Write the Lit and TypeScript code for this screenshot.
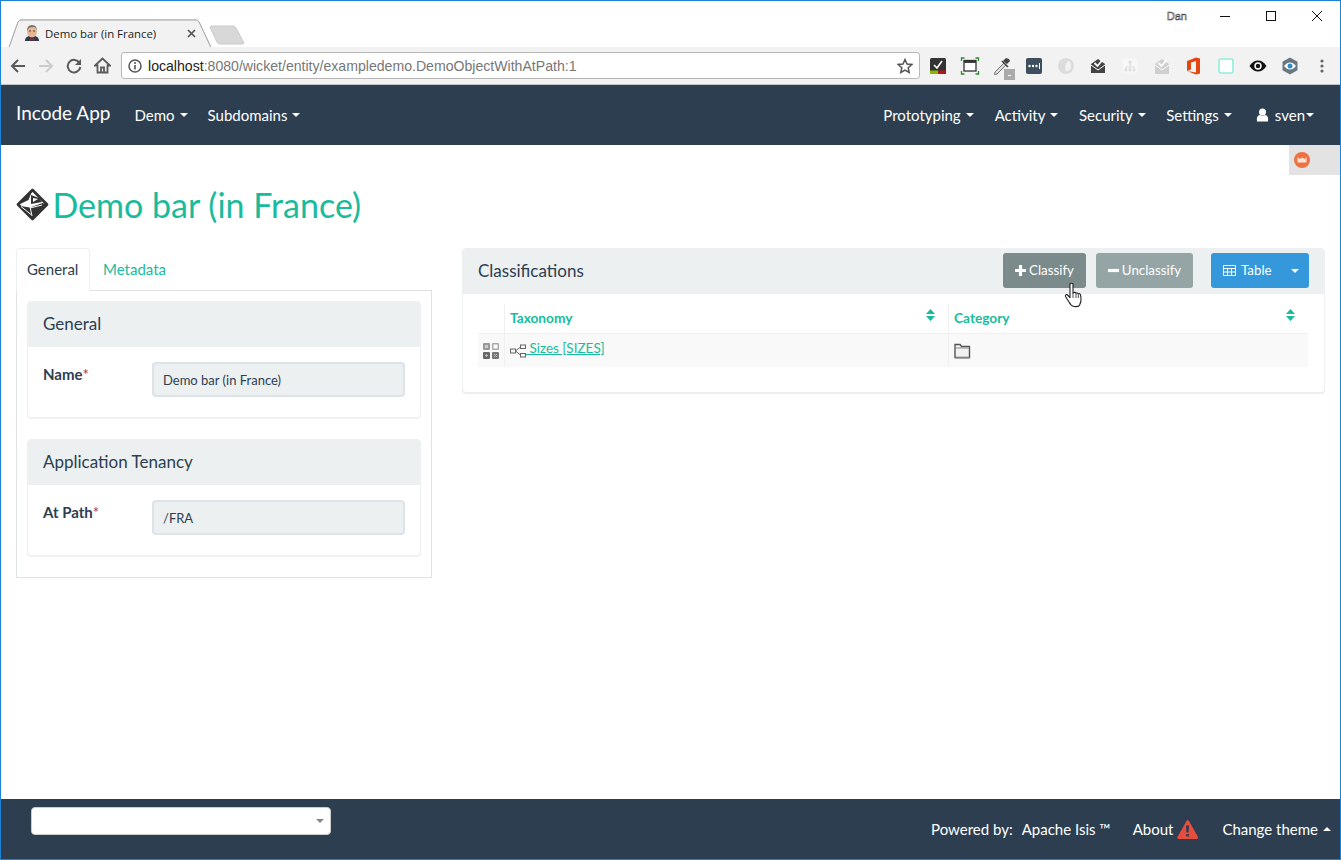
import { LitElement, html, css, svg } from "lit";
import { customElement } from "lit/decorators.js";

const ext = [
  svg`<rect x="2" y="2" width="16" height="16" rx="1.5" fill="#333"/><rect x="2" y="14.500" width="8" height="3.500" fill="#8db600"/><rect x="10" y="14.500" width="8" height="3.500" fill="#b01818"/><path d="M6 9l3 3 5-7" fill="none" stroke="#fff" stroke-width="1.600"/>`,
  svg`<rect x="4" y="4.500" width="12" height="10.500" fill="#fff" stroke="#333" stroke-width="1.300"/><rect x="4" y="4.500" width="12" height="2.400" fill="#333"/><path d="M1.500 5V2h3M15.500 2h3v3M18.500 15v3h-3M4.500 18h-3v-3" fill="none" stroke="#2a8a2a" stroke-width="1.300"/>`,
  svg`<path d="M3 16l9-9 2 2-9 9-2.500.5z" fill="#ddd" stroke="#777"/><path d="M11 5l3-3 3 1 1 2-3 3z" fill="#444"/><path d="M10 5l6 6" stroke="#444" stroke-width="1.600"/><rect x="12" y="13" width="11" height="11" fill="#aaa"/><rect x="16" y="19" width="3" height="1" fill="#fff"/>`,
  svg`<rect x="2" y="2" width="16" height="16" rx="2" fill="#3d4e5e"/><circle cx="5.500" cy="10" r="1.200" fill="#fff"/><circle cx="9" cy="10" r="1.200" fill="#fff"/><circle cx="12.500" cy="10" r="1.200" fill="#fff"/><rect x="15" y="7" width="1" height="6" fill="#fff"/>`,
  svg`<path d="M10 2a8 8 0 1 0 0 16 8 8 0 0 0 0-16zm3 3c-3 1-5 6-3 10 2 1 5-1 5-5 0-2-1-4-2-5z" fill="#dcdcdc" fill-rule="evenodd"/>`,
  svg`<path d="M3 8l7-5 7 5v9H3z" fill="#444"/><path d="M3 9l7 5 7-5" fill="none" stroke="#fff"/><path d="M6.500 7l3 3 5-6" fill="none" stroke="#fff" stroke-width="1.800"/>`,
  svg`<rect x="2.500" y="2.500" width="15" height="15" rx="3" fill="#f7f7f7"/><path d="M10 5v3M6 14v-3h8v3M10 8v6" fill="none" stroke="#ddd" stroke-width="1.200"/><circle cx="10" cy="6" r="1.600" fill="#ddd"/><circle cx="6" cy="14" r="1.500" fill="#ddd"/><circle cx="10" cy="14" r="1.500" fill="#ddd"/><circle cx="14" cy="14" r="1.500" fill="#ddd"/>`,
  svg`<path d="M3 8l7-5 7 5v10H3z" fill="#cfcfcf"/><path d="M3 9l7 5 7-5" fill="none" stroke="#fff"/><path d="M6.500 7l3 3 5-6" fill="none" stroke="#fff" stroke-width="1.800"/>`,
  svg`<path d="M3 5l9-3.500 4 1v15l-4 1L3 15l9 1.500V5L7 6.500v7L3 15z" fill="#e3470f"/>`,
  svg`<rect x="3" y="3" width="14" height="14" rx="2" fill="#fff" stroke="#8feedd" stroke-width="1.600"/>`,
  svg`<path d="M1.500 10C4 6 7 4.500 10 4.500S16 6 18.500 10C16 14 13 15.500 10 15.500S4 14 1.500 10z" fill="#111"/><circle cx="10" cy="10" r="3.700" fill="#fff"/><circle cx="10" cy="10" r="2.200" fill="#111"/>`,
  svg`<path d="M10 1.500l7.500 4.300v8.400L10 18.500l-7.500-4.300V5.800z" fill="#6b7780"/><path d="M4 10c2-2.500 4-3.500 6-3.500s4 1 6 3.500c-2 2.500-4 3.500-6 3.500S6 12.500 4 10z" fill="#fff"/><circle cx="10" cy="10" r="2.500" fill="#2a8fc4"/>`,
];

@customElement("app-root")
export class AppRoot extends LitElement {
  static styles = css`
    :host { display: block; font-family: Lato, "Open Sans", sans-serif; color: #2c3e50; }
    * { box-sizing: border-box; }
    a { text-decoration: none; color: inherit; }
    .window { position: relative; height: 860px; border: 1px solid #1b82d6; display: flex; flex-direction: column; background: #fff; overflow: hidden; }

    .titlebar { height: 46px; flex: none; display: flex; align-items: flex-end; position: relative; font-family: "Open Sans", "Liberation Sans", sans-serif; }
    .tabshape { position: absolute; left: 0; top: 0; width: 1339px; height: 46px; }
    .tab { position: relative; width: 203px; margin-left: 6px; height: 27px; display: flex; align-items: center; padding: 0 0 1px 17px; gap: 5px; font-size: 11.400px; color: #222; }
    .tab .tt { flex: 1; white-space: nowrap; }
    .tab .x { margin-right: 14px; display: block; }
    .winctl { position: absolute; top: 0; right: 0; height: 30px; display: flex; align-items: center; }
    .dan { font-family: "Liberation Sans", sans-serif; font-size: 11px; color: #fff; -webkit-text-stroke: 0.5px #333; margin-right: 15px; }
    .wc { width: 46px; height: 30px; display: flex; align-items: center; justify-content: center; }
    .wc svg { display: block; }

    .toolbar { height: 38px; flex: none; background: #f2f2f2; border-bottom: 1px solid #c4c4c4; display: flex; align-items: center; padding-left: 3px; }
    .navbtn { width: 28px; height: 24px; display: flex; align-items: center; justify-content: center; flex: none; }
    .omni { margin-left: 5px; width: 799px; height: 27px; background: #fff; border: 1px solid #b8b8b8; border-radius: 3px; display: flex; align-items: center; font-family: "Liberation Sans", sans-serif; font-size: 14.100px; color: #222; padding: 0 6px 0 6px; flex: none; }
    .omni .info { margin-right: 6px; flex: none; display: block; }
    .omni .url { flex: 1; white-space: nowrap; overflow: hidden; }
    .omni .dim { color: #777; }
    .exts { display: flex; align-items: center; margin-left: 2px; }
    .ext { width: 32px; height: 24px; display: flex; align-items: center; justify-content: center; }
    .ext svg { display: block; overflow: visible; }
    .menu { width: 32px; display: flex; justify-content: center; }
    .menu svg { display: block; }

    .nav { height: 60px; flex: none; background: #2c3e50; color: #fff; display: flex; align-items: center; padding: 0 15px; font-size: 15px; }
    .brand { font-size: 19px; margin-right: 24px; margin-bottom: 6px; }
    .nav a.item { margin-right: 20px; display: inline-flex; align-items: center; gap: 5px; }
    .nav a.item.r { margin-right: 20.500px; }
    .nav a.item.p { margin-right: 21px; }
    .nav a.item.set { margin-right: 24px; }
    .nav .spacer { flex: 1; }
    .caret { display: inline-block; width: 0; height: 0; border-left: 4px solid transparent; border-right: 4px solid transparent; border-top: 4px solid currentColor; }
    .caret.up { border-top: 0; border-bottom: 4px solid currentColor; }
    .nav a.item.user { margin-right: 11px; gap: 1px; }
    .nav .user svg { margin-right: 5px; display: block; }

    .floater { position: absolute; right: 0; top: 144px; width: 51px; height: 30px; background: #e3e3e3; display: flex; align-items: center; padding-left: 5px; }

    .content { flex: 1; padding: 0 15px; min-height: 0; }
    .title { display: flex; align-items: center; height: 46px; margin: 36px 0 0; gap: 3.500px; color: #18bc9c; font-size: 34px; font-weight: 400; white-space: nowrap; }
    .title svg { display: block; flex: none; }
    .cols { display: grid; grid-template-columns: 416px 863px; gap: 30px; margin-top: 21px; align-items: start; }

    .tabs { display: flex; height: 43px; font-size: 15px; }
    .t { padding: 0 10px 2px; display: flex; align-items: center; border: 1px solid transparent; color: #18bc9c; margin-left: 2px; }
    .t.on { color: #2c3e50; background: #fff; border-color: #ecf0f1; border-bottom-color: #fff; border-radius: 4px 4px 0 0; margin-left: 0; height: 43px; width: 74px; position: relative; z-index: 1; }
    .pane { border: 1px solid #dfe3e5; margin-top: -1px; padding: 10px; height: 288px; display: flex; flex-direction: column; gap: 21px; }
    .panel { border: 1px solid #ecf0f1; border-radius: 4px; box-shadow: 0 1px 1px rgba(0,0,0,.05); background: #fff; }
    .ph { height: 45px; background: #ecf0f1; display: flex; align-items: center; padding: 0 15px 2px; font-size: 17px; }
    .pb { display: grid; grid-template-columns: 109px 253px; padding: 15px 0 20px 15px; height: 70px; }
    .lab { font-weight: 700; font-size: 15px; padding-top: 2px; line-height: 20px; }
    .lab i { color: #b8321f; font-style: normal; font-weight: 400; }
    .inp { height: 35px; background: #ecf0f1; border: 2px solid #dde4e9; border-radius: 4px; font-size: 13px; display: flex; align-items: center; padding: 0 9px; }

    .cp { border: 1px solid #ecf0f1; border-radius: 4px; background: #fff; box-shadow: 0 1px 1px rgba(0,0,0,.08); height: 145px; }
    .ch { height: 45px; background: #ecf0f1; display: flex; align-items: center; padding: 0 15px 2px; font-size: 17px; border-radius: 3px 3px 0 0; }
    .ch .nm { flex: 1; }
    .btn { height: 35px; border-radius: 3px; color: #fff; font-size: 13.300px; display: flex; align-items: center; justify-content: center; gap: 3px; padding-bottom: 2px; }
    .btn svg { margin-top: 2px; }
    .b1 { width: 83px; background: #7b8a8b; margin-right: 10px; }
    .b2 { width: 97px; background: #95a5a6; margin-right: 18px; }
    .b3 { width: 98px; background: #3498db; margin-right: 0; justify-content: flex-start; padding-left: 12px; gap: 0; }
    .b3 svg { margin-right: 5px; display: block; }
    .b3 .caret { margin-left: 19px; margin-top: 2px; }
    .btn svg { display: block; }

    .tbl { margin: 10px 16px 0 15px; }
    .tr { display: grid; grid-template-columns: 26px 444px 360px; }
    .tr > div { border-left: 1px solid #ecf0f1; display: flex; align-items: center; padding: 0 5px; }
    .tr > div:first-child { border-left: 0; padding: 0; justify-content: center; }
    .head { height: 30px; border-bottom: 1px solid #ecf0f1; font-size: 13.700px; font-weight: 700; color: #18bc9c; }
    .head > div { padding: 0 13px 2px 5px !important; justify-content: space-between; }
    .head svg { display: block; margin-bottom: 5px; }
    .row { height: 33px; background: #f9f9f9; font-size: 13.500px; }
    .row a { color: #18bc9c; text-decoration: underline; display: block; margin-bottom: 6px; white-space: pre; }
    .row svg { display: block; }
    .row .ic { margin-right: 0; }

    .cursor { position: absolute; left: 1063px; top: 281px; display: block; }

    .foot { height: 60px; flex: none; background: #2c3e50; color: #fff; display: flex; align-items: center; padding: 0 9px 0 30px; font-size: 15px; }
    .sel { width: 300px; height: 28px; background: #fff; border-radius: 4px; border: 1px solid #ccc; margin-bottom: 17px; display: flex; align-items: center; justify-content: flex-end; padding-right: 6px; color: #888; }
    .foot .spacer { flex: 1; }
    .foot .a { display: flex; align-items: center; }
    .foot .p { margin-right: 9px; }
    .foot .i { margin-right: 22px; }
    .foot .ab { gap: 4px; margin-right: 24px; }
    .foot .th { gap: 5px; }
    .foot svg { display: block; }
  `;

  render() {
    const sortIcon = html`<svg width="9" height="12" viewBox="0 0 9 12"><path d="M4.500 0l4.500 5H0zM4.500 12L9 7H0z" fill="#18bc9c"/></svg>`;
    return html`<div class="window">
      <div class="titlebar">
        <svg class="tabshape" viewBox="0 0 1339 46">
          <path d="M0 46.500H8L17 21q1-2 3-2h175q2 0 3 2l12 25.500H1339" fill="#fff" stroke="#b0b0b0"/>
          <path d="M8 47L17 21q1-2 3-2h175q2 0 3 2l12 26z" fill="#f2f2f2"/>
          <path d="M8 46.500L17 21q1-2 3-2h175q2 0 3 2l12 25.500" fill="none" stroke="#a8a8a8"/>
          <path d="M209 26q0-1 2-1h21q2 0 3 2l8 15q0 1-2 1h-22q-2 0-3-2z" fill="#d8d8d8" stroke="#c9c9c9"/>
        </svg>
        <div class="tab">
          <svg width="16" height="16" viewBox="0 0 16 16"><path d="M1 16q0-4 4-5h6q4 1 4 5z" fill="#2d3a4e"/><ellipse cx="8" cy="6.500" rx="5" ry="6" fill="#e5b795"/><path d="M3 6q0-6 5-6 5 0 5 6-1-4-3-4-4 0-5 1z" fill="#7a7068"/><path d="M5.500 13l2.500 1.300 2.500-1.300v3L8 15l-2.500 1z" fill="#a3262a"/><circle cx="6" cy="6" r=".8" fill="#333"/><circle cx="10" cy="6" r=".8" fill="#333"/></svg>
          <span class="tt">Demo bar (in France)</span>
          <svg class="x" width="9" height="9" viewBox="0 0 9 9"><path d="M1 1l7 7M8 1L1 8" stroke="#555" stroke-width="1.700"/></svg>
        </div>
        <div class="winctl">
          <span class="dan">Dan</span>
          <span class="wc"><svg width="10" height="10"><path d="M0 5.500h10" stroke="#111"/></svg></span>
          <span class="wc"><svg width="10" height="10"><rect x=".5" y=".5" width="9" height="9" fill="none" stroke="#111"/></svg></span>
          <span class="wc"><svg width="10" height="10"><path d="M0 0l10 10M10 0L0 10" stroke="#111"/></svg></span>
        </div>
      </div>
      <div class="toolbar">
        <span class="navbtn"><svg width="16" height="16" viewBox="0 0 16 16"><path d="M15 8H2M8 2L2 8l6 6" fill="none" stroke="#5a5a5a" stroke-width="2"/></svg></span>
        <span class="navbtn"><svg width="16" height="16" viewBox="0 0 16 16"><path d="M1 8h13M8 2l6 6-6 6" fill="none" stroke="#ccc" stroke-width="2"/></svg></span>
        <span class="navbtn"><svg width="16" height="16" viewBox="0 0 16 16"><path d="M13.500 5A6.300 6.300 0 1 0 14.300 9" fill="none" stroke="#5a5a5a" stroke-width="2"/><path d="M15 1v6H9z" fill="#5a5a5a"/></svg></span>
        <span class="navbtn"><svg width="17" height="17" viewBox="0 0 17 17"><path d="M8.500 1.500L1 8.500h2.500V15.500h10V8.500H16zM7 15.500V10.500h3v5" fill="none" stroke="#5a5a5a" stroke-width="1.800"/></svg></span>
        <div class="omni">
          <svg class="info" width="14" height="14" viewBox="0 0 14 14"><circle cx="7" cy="7" r="6" fill="none" stroke="#555" stroke-width="1.500"/><path d="M7 6v4.500" stroke="#555" stroke-width="1.600"/><circle cx="7" cy="4" r="1" fill="#555"/></svg>
          <span class="url">localhost<span class="dim">:8080/wicket/entity/exampledemo.DemoObjectWithAtPath:1</span></span>
          <svg width="16" height="16" viewBox="0 0 16 16"><path d="M8 1.500l2 4.500 4.800.5-3.600 3.200 1 4.800L8 12l-4.200 2.500 1-4.800L1.200 6.500 6 6z" fill="none" stroke="#555" stroke-width="1.500"/></svg>
        </div>
        <div class="exts">
          ${ext.map((e) => html`<span class="ext"><svg width="20" height="20" viewBox="0 0 20 20">${e}</svg></span>`)}
          <span class="menu"><svg width="4" height="14" viewBox="0 0 4 14"><circle cx="2" cy="2" r="1.600" fill="#666"/><circle cx="2" cy="7" r="1.600" fill="#666"/><circle cx="2" cy="12" r="1.600" fill="#666"/></svg></span>
        </div>
      </div>
      <div class="nav">
        <a class="brand">Incode App</a>
        <a class="item">Demo <span class="caret"></span></a>
        <a class="item">Subdomains <span class="caret"></span></a>
        <span class="spacer"></span>
        <a class="item p">Prototyping <span class="caret"></span></a>
        <a class="item r">Activity <span class="caret"></span></a>
        <a class="item r">Security <span class="caret"></span></a>
        <a class="item set">Settings <span class="caret"></span></a>
        <a class="item user"><svg width="13" height="14" viewBox="0 0 13 14"><circle cx="6.500" cy="4" r="3.500" fill="#fff"/><path d="M1 13.500q-1-6 3-6.500 2.500 1.500 5 0 4 .5 3 6.500z" fill="#fff"/></svg>sven<span class="caret"></span></a>
      </div>
      <div class="floater"><svg width="16" height="16" viewBox="0 0 16 16"><circle cx="8" cy="8" r="8" fill="#ee7142"/><path d="M3.500 5l2 2 2.500-1.500L10.500 7l2-2v5.500h-9z" fill="#fbe3d8"/></svg></div>
      <div class="content">
        <h1 class="title">
          <svg width="33" height="33" viewBox="0 0 33 33"><path d="M16.500 2L31 16.500 16.500 31 2 16.500z" fill="#fff" stroke="#333" stroke-width="2.800" stroke-linejoin="round"/><path d="M3 16.500L16.500 2l-4 10z" fill="#333"/><path d="M4 18l10 1.500L26.500 15l4 1.500L16.500 30.500z" fill="#333"/><path d="M5 18.500l10 8M13 14l3 14M14 20l12-3" fill="none" stroke="#fff" stroke-width="1"/><path d="M15 7l8 3 3 4-11 2zM17 10l5 1-5 3z" fill="#333" fill-rule="evenodd"/></svg>
          Demo bar (in France)
        </h1>
        <div class="cols">
          <div>
            <div class="tabs"><a class="t on">General</a><a class="t">Metadata</a></div>
            <div class="pane">
              <div class="panel"><div class="ph">General</div><div class="pb"><div class="lab">Name<i>*</i></div><div class="inp">Demo bar (in France)</div></div></div>
              <div class="panel"><div class="ph">Application Tenancy</div><div class="pb"><div class="lab">At Path<i>*</i></div><div class="inp">/FRA</div></div></div>
            </div>
          </div>
          <div class="cp">
            <div class="ch">
              <span class="nm">Classifications</span>
              <a class="btn b1"><svg width="11" height="11" viewBox="0 0 11 11"><path d="M5.500 0v11M0 5.500h11" stroke="#fff" stroke-width="3.200"/></svg>Classify</a>
              <a class="btn b2"><svg width="11" height="11" viewBox="0 0 11 11"><path d="M0 5.500h11" stroke="#fff" stroke-width="3.200"/></svg>Unclassify</a>
              <a class="btn b3"><svg width="13" height="11" viewBox="0 0 13 11"><path d="M.5.500h12v10H.5zM.5 3.500h12M.5 7h12M4.500 3.500v7M8.500 3.500v7" fill="none" stroke="#fff"/></svg>Table<span class="caret"></span></a>
            </div>
            <div class="tbl">
              <div class="tr head"><div></div><div>Taxonomy ${sortIcon}</div><div>Category ${sortIcon}</div></div>
              <div class="tr row">
                <div><svg width="16" height="16" viewBox="0 0 16 16"><rect x="0" y="0" width="7" height="7" rx="1" fill="#999"/><rect x="9" y="0" width="7" height="7" rx="1" fill="#aaa"/><rect x="0" y="9" width="7" height="7" rx="1" fill="#666"/><rect x="9" y="9" width="7" height="7" rx="1" fill="#777"/><rect x="2" y="2" width="3" height="3" fill="#ccc"/><rect x="10.500" y="1.500" width="4" height="4" fill="#fff"/><path d="M2 12.500h3M3.500 11v3M11 11l3 3M14 11l-3 3" stroke="#bbb"/></svg></div>
                <div><svg class="ic" width="16" height="14" viewBox="0 0 16 14"><rect x=".5" y="5" width="5" height="4" fill="none" stroke="#666"/><rect x="10.500" y="1" width="5" height="3.500" fill="none" stroke="#666"/><rect x="10.500" y="9.500" width="5" height="3.500" fill="none" stroke="#666"/><path d="M5.500 7L10.500 3M5.500 7l5 4" stroke="#666" fill="none"/></svg><a> Sizes [SIZES]</a></div>
                <div><svg width="17" height="16" viewBox="0 0 17 16"><path d="M1 14.500V1.500h5l1.500 2H15.500v11z" fill="#f3f3f3" stroke="#555" stroke-width="1.400"/><path d="M1 5h14.500" stroke="#888"/><path d="M1.500 15h14" stroke="#999" stroke-width="1.500"/></svg></div>
              </div>
            </div>
          </div>
        </div>
      </div>
      <svg class="cursor" width="20" height="26" viewBox="0 0 20 26"><path d="M6 2q1.500-1.500 3 0v9l1-.5q1.500-.5 2 .7 1.500-.7 2.200.6 1.800-.6 2.300 1l.5 3q.5 4-1.500 7.500Q14 25 10 24.500 7 24 5 20L1.500 14.500q-.5-2 1.500-2l3 3z" fill="#fff" stroke="#222" stroke-width="1.100" stroke-linejoin="round"/><path d="M9 11v5M12 11.500V16M14.300 12.300V16" stroke="#222" stroke-width=".8"/></svg>
      <div class="foot">
        <div class="sel"><span class="caret"></span></div>
        <span class="spacer"></span>
        <span class="a p">Powered by:</span>
        <span class="a i">Apache Isis ™</span>
        <span class="a ab">About <svg width="21" height="19" viewBox="0 0 21 19"><path d="M10.500 0q1 0 1.500 1l9 16q.5 2-1.500 2h-18Q0 19 .5 17l9-16q.500-1 1-1z" fill="#e74c3c"/><path d="M9 5.500h3l-.4 7h-2.200zM9.200 14h2.600v2.600H9.200z" fill="#2c3e50"/></svg></span>
        <span class="a th">Change theme <span class="caret up"></span></span>
      </div>
    </div>`;
  }
}
